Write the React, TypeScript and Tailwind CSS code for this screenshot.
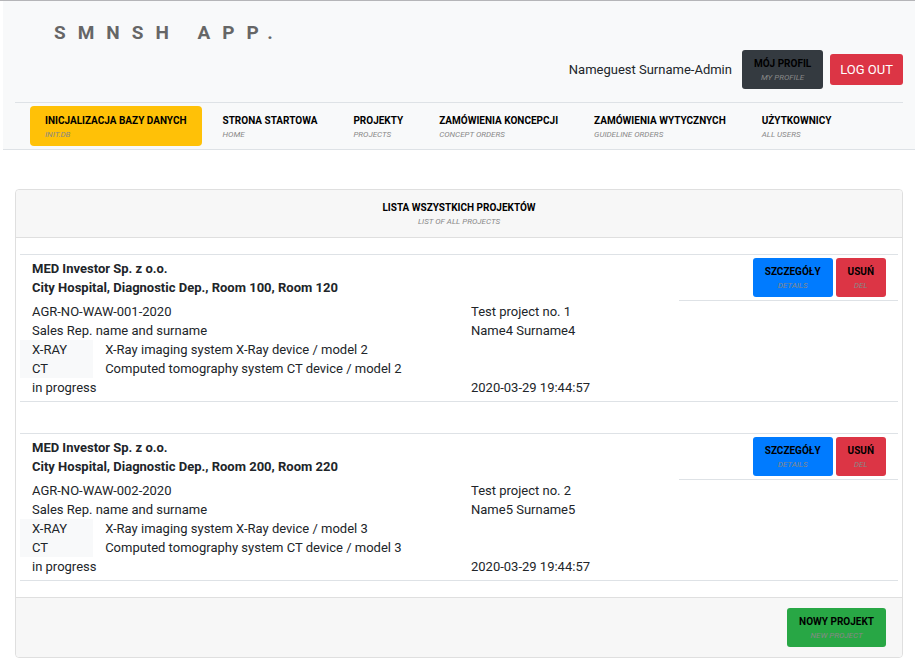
import type { ReactNode } from "react";

type Project = {
  investor: string;
  site: string;
  agreement: string;
  title: string;
  salesRep: string;
  owner: string;
  devices: { kind: string; description: string }[];
  status: string;
  updated: string;
};

const projects: Project[] = [
  {
    investor: "MED Investor Sp. z o.o.",
    site: "City Hospital, Diagnostic Dep., Room 100, Room 120",
    agreement: "AGR-NO-WAW-001-2020",
    title: "Test project no. 1",
    salesRep: "Sales Rep. name and surname",
    owner: "Name4 Surname4",
    devices: [
      { kind: "X-RAY", description: "X-Ray imaging system X-Ray device / model 2" },
      { kind: "CT", description: "Computed tomography system CT device / model 2" },
    ],
    status: "in progress",
    updated: "2020-03-29 19:44:57",
  },
  {
    investor: "MED Investor Sp. z o.o.",
    site: "City Hospital, Diagnostic Dep., Room 200, Room 220",
    agreement: "AGR-NO-WAW-002-2020",
    title: "Test project no. 2",
    salesRep: "Sales Rep. name and surname",
    owner: "Name5 Surname5",
    devices: [
      { kind: "X-RAY", description: "X-Ray imaging system X-Ray device / model 3" },
      { kind: "CT", description: "Computed tomography system CT device / model 3" },
    ],
    status: "in progress",
    updated: "2020-03-29 19:44:57",
  },
];

const navItems = [
  { pl: "INICJALIZACJA BAZY DANYCH", en: "INIT.DB", active: true },
  { pl: "STRONA STARTOWA", en: "HOME" },
  { pl: "PROJEKTY", en: "PROJECTS" },
  { pl: "ZAMÓWIENIA KONCEPCJI", en: "CONCEPT ORDERS" },
  { pl: "ZAMÓWIENIA WYTYCZNYCH", en: "GUIDELINE ORDERS" },
  { pl: "UŻYTKOWNICY", en: "ALL USERS" },
];

function Label({ pl, en }: { pl: string; en: string }) {
  return (
    <>
      <span className="block text-[10px] leading-4 font-bold whitespace-nowrap text-black">{pl}</span>
      <span className="block text-[8px] leading-3 whitespace-nowrap text-[#888888] italic">{en}</span>
    </>
  );
}

function ActionButton({ pl, en, color }: { pl: string; en: string; color: string }) {
  return (
    <button type="button" className={`h-[39px] rounded-[3px] px-3 pt-px text-center ${color}`}>
      <Label pl={pl} en={en} />
    </button>
  );
}

function Cell({ span, children }: { span: string; children?: ReactNode }) {
  return <div className={`px-3 ${span}`}>{children}</div>;
}

function ProjectRow({ project }: { project: Project }) {
  return (
    <article className="border-y border-[#dee2e6] pb-1">
      <div className="mb-px grid grid-cols-12">
        <div className="col-span-9 px-3 pt-1 font-bold">
          <h2>{project.investor}</h2>
          <p>{project.site}</p>
        </div>
        <div className="col-span-3 flex justify-end gap-[3px] border-b border-[#dee2e6] px-3 py-[3px]">
          <ActionButton pl="SZCZEGÓŁY" en="DETAILS" color="bg-[#007bff]" />
          <ActionButton pl="USUŃ" en="DEL" color="bg-[#dc3545]" />
        </div>
      </div>
      <div className="grid grid-cols-12">
        <Cell span="col-span-6">{project.agreement}</Cell>
        <Cell span="col-span-6">{project.title}</Cell>
        <Cell span="col-span-6">{project.salesRep}</Cell>
        <Cell span="col-span-6">{project.owner}</Cell>
        {project.devices.map((device) => (
          <div key={device.kind} className="col-span-12 grid grid-cols-12">
            <Cell span="col-span-1 bg-[#f8f9fa] whitespace-nowrap">{device.kind}</Cell>
            <Cell span="col-span-11">{device.description}</Cell>
          </div>
        ))}
        <Cell span="col-span-6">{project.status}</Cell>
        <Cell span="col-span-6">{project.updated}</Cell>
      </div>
    </article>
  );
}

export default function App() {
  return (
    <div className="border-t border-[#b5b5b8] bg-white pl-[3px] font-[Roboto,sans-serif] text-[13px] leading-[19px] text-[#212529]">
      <header className="border-b border-[#dee2e6] bg-[#f8f9fa] px-3 pt-5">
        <h1 className="px-[39px] text-[19px] leading-6 font-bold tracking-[12px] text-[#666666]">SMNSH APP.</h1>
        <div className="mt-[5px] flex items-center justify-end">
          <span className="mr-[10px]">Nameguest Surname-Admin</span>
          <span className="mr-[7px] flex">
            <ActionButton pl="MÓJ PROFIL" en="MY PROFILE" color="bg-[#343a40]" />
          </span>
          <button type="button" className="h-[31px] rounded-[3px] bg-[#dc3545] px-[10px] text-white">
            LOG OUT
          </button>
        </div>
        <nav className="mt-[13px] flex gap-[6px] border-t border-[#dee2e6] px-[15px] py-[3px]">
          {navItems.map((item) => (
            <a
              key={item.pl}
              href="#"
              className={`h-10 rounded px-[15px] pt-[7px] ${item.active ? "bg-[#ffc107]" : ""}`}
            >
              <Label pl={item.pl} en={item.en} />
            </a>
          ))}
        </nav>
      </header>

      <main className="mx-3 mt-[39px] rounded border border-[#dfdfdf]">
        <div className="rounded-t border-b border-[#dfdfdf] bg-[#f7f7f7] pt-[10px] pb-[9px] text-center">
          <Label pl="LISTA WSZYSTKICH PROJEKTÓW" en="LIST OF ALL PROJECTS" />
        </div>
        <div className="flex flex-col gap-[31px] px-1 py-4">
          {projects.map((project) => (
            <ProjectRow key={project.agreement} project={project} />
          ))}
        </div>
        <div className="flex justify-end rounded-b border-t border-[#dfdfdf] bg-[#f7f7f7] px-4 py-[10px]">
          <ActionButton pl="NOWY PROJEKT" en="NEW PROJECT" color="bg-[#28a745]" />
        </div>
      </main>
    </div>
  );
}
